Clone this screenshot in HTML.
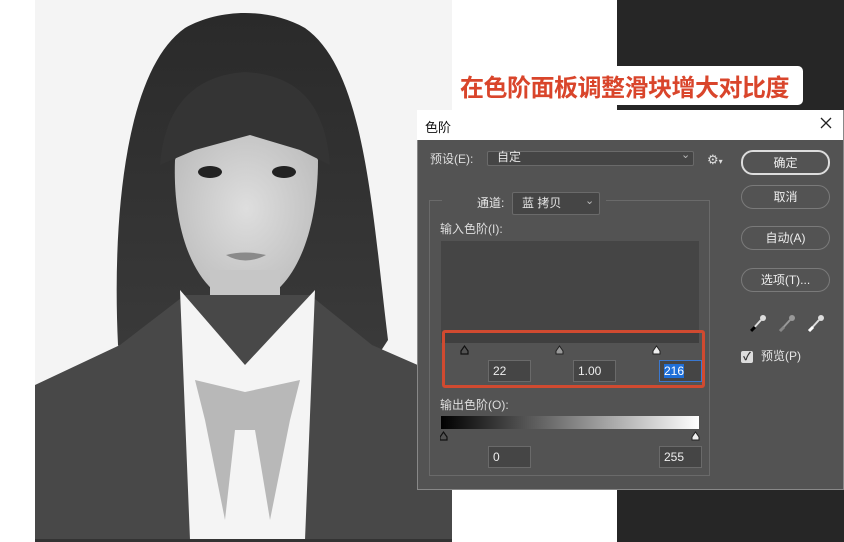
<!DOCTYPE html>
<html><head><meta charset="utf-8"><style>
*{margin:0;padding:0;box-sizing:border-box}
body{width:844px;height:542px;overflow:hidden;background:#fff;position:relative;font-family:"Liberation Sans","Noto Sans CJK SC",sans-serif}
.a{position:absolute}
.t{color:#e6e6e6;font-size:12px;line-height:1}
.btn{position:absolute;left:741px;width:89px;height:24px;border:1px solid #7a7a7a;border-radius:12px;color:#eee;font-size:12px;text-align:center;line-height:22px}
.inp{position:absolute;height:22px;border:1px solid #6a6a6a;background:#454545;color:#eee;font-size:12px;line-height:20px;padding-left:4px}
</style></head><body>
<div class="a" style="left:617px;top:0;width:227px;height:542px;background:#262626"></div>
<svg class="a" style="left:35px;top:0" width="417" height="542" viewBox="35 0 417 542">
<defs>
<radialGradient id="f" cx="0.5" cy="0.45" r="0.6"><stop offset="0" stop-color="#dedede"/><stop offset="1" stop-color="#bcbcbc"/></radialGradient>
<linearGradient id="h" x1="0" y1="0" x2="0" y2="1"><stop offset="0" stop-color="#2a2a2a"/><stop offset="1" stop-color="#3a3a3a"/></linearGradient>
</defs>
<rect x="35" y="0" width="417" height="542" fill="#f4f4f4"/>
<path d="M118 345 C112 220 125 70 185 28 C220 8 270 8 305 28 C365 70 372 210 388 340 L375 360 L125 360Z" fill="url(#h)"/>
<path d="M175 160 C172 240 200 300 245 305 C290 300 318 240 318 160 C300 120 190 120 175 160Z" fill="url(#f)"/>
<path d="M160 165 C165 100 200 75 245 72 C295 75 325 100 330 165 L300 150 L250 135 L195 150Z" fill="#343434"/>
<rect x="210" y="270" width="70" height="70" fill="#c6c6c6"/>
<ellipse cx="210" cy="172" rx="12" ry="6" fill="#222"/><ellipse cx="284" cy="172" rx="12" ry="6" fill="#222"/>
<path d="M226 255 Q245 250 266 255 Q245 266 226 255Z" fill="#8a8a8a"/>
<path d="M35 385 L120 345 L185 295 L310 295 L372 345 L452 380 L452 542 L35 542Z" fill="#484848"/>
<path d="M180 290 L245 365 L315 290 L305 540 L190 540Z" fill="#f4f4f4"/>
<path d="M195 380 L245 392 L300 380 L290 420 L270 520 L255 430 L235 430 L225 520 L205 420Z" fill="#b8b8b8"/>
<rect x="35" y="539" width="417" height="3" fill="#333"/>
</svg>
<div class="a" style="left:455px;top:66px;width:348px;height:39px;background:#fff;border-radius:5px;color:#d9452b;font-size:24px;font-weight:bold;line-height:39px;padding-left:5px;font-family:'Noto Sans CJK SC',sans-serif;letter-spacing:-0.5px;white-space:nowrap">在色阶面板调整滑块增大对比度</div>
<div class="a" style="left:417px;top:110px;width:427px;height:380px;background:#535353;border:1px solid #888"></div>
<div class="a" style="left:417px;top:110px;width:426px;height:30px;background:#fff"></div>
<div class="a" style="left:425px;top:117px;font-size:13px;color:#111">色阶</div>
<svg class="a" style="left:820px;top:117px" width="12" height="12"><path d="M1 1L11 11M11 1L1 11" stroke="#222" stroke-width="1.3"/></svg>
<div class="a t" style="left:430px;top:153px;color:#ddd">预设(E):</div>
<div class="a" style="left:487px;top:151px;width:207px;height:15px;border:1px solid #6a6a6a;background:#454545;border-radius:2px"></div>
<div class="a t" style="left:497px;top:151px">自定</div>
<div class="a t" style="left:681px;top:150px;font-size:11px;color:#bbb">⌄</div>
<div class="a t" style="left:707px;top:153px;font-size:13px;color:#ddd">⚙<span style="font-size:8px">▾</span></div>
<div class="btn" style="top:150px;height:25px;border:2px solid #ddd">确定</div>
<div class="btn" style="top:185px">取消</div>
<div class="btn" style="top:226px">自动(A)</div>
<div class="btn" style="top:268px">选项(T)...</div>
<svg class="a" style="left:748px;top:312px" width="80" height="22">
<g stroke-width="2" fill="none"><path d="M3 19 L13 8" stroke="#ddd"/><path d="M3 19 L7 15" stroke="#000" stroke-width="3"/><circle cx="15" cy="6" r="3" fill="#ddd"/>
<path d="M32 19 L42 8" stroke="#999"/><path d="M32 19 L36 15" stroke="#888" stroke-width="3"/><circle cx="44" cy="6" r="3" fill="#999"/>
<path d="M61 19 L71 8" stroke="#ddd"/><path d="M61 19 L65 15" stroke="#fff" stroke-width="3"/><circle cx="73" cy="6" r="3" fill="#ddd"/></g></svg>
<div class="a" style="left:741px;top:351px;width:12px;height:12px;background:#ddd;border-radius:2px;color:#333;font-size:11px;line-height:12px;text-align:center;font-weight:bold">✓</div>
<div class="a t" style="left:761px;top:350px">预览(P)</div>
<div class="a" style="left:429px;top:200px;width:281px;height:276px;border:1px solid #6a6a6a"></div>
<div class="a" style="left:442px;top:195px;width:164px;height:12px;background:#535353"></div>
<div class="a t" style="left:477px;top:197px">通道:</div>
<div class="a" style="left:512px;top:192px;width:88px;height:23px;border:1px solid #6a6a6a;background:#454545;border-radius:2px"></div>
<div class="a t" style="left:522px;top:197px">蓝 拷贝</div>
<div class="a t" style="left:585px;top:196px;font-size:11px;color:#bbb">⌄</div>
<div class="a t" style="left:440px;top:223px;color:#ddd">输入色阶(I):</div>
<div class="a" style="left:441px;top:241px;width:258px;height:102px;background:#454545"></div>
<div class="a" style="left:445px;top:333px;width:254px;height:10px;background:#3f3f3f"></div>
<div class="a" style="left:442px;top:330px;width:263px;height:58px;border:3px solid #d04a30;border-radius:3px"></div>
<svg class="a" style="left:440px;top:343px" width="270" height="100">
<path d="M21 11 L28 11 L28 8 L24.5 3 L21 8Z" fill="none" stroke="#111" stroke-width="1.2"/>
<path d="M116 11 L123 11 L123 8 L119.5 3 L116 8Z" fill="#999" stroke="#222" stroke-width="1"/>
<path d="M213 11 L220 11 L220 8 L216.5 3 L213 8Z" fill="#eee" stroke="#222" stroke-width="1"/>
<path d="M0 97 L7 97 L7 94 L3.5 89 L0 94Z" fill="none" stroke="#111" stroke-width="1.2"/>
<path d="M252 97 L259 97 L259 94 L255.5 89 L252 94Z" fill="#eee" stroke="#222" stroke-width="1"/>
</svg>
<div class="inp" style="left:488px;top:360px;width:43px">22</div>
<div class="inp" style="left:573px;top:360px;width:43px">1.00</div>
<div class="inp" style="left:659px;top:360px;width:43px;border:1px solid #3a78d0"><span style="background:#1f6fd8;color:#fff">216</span></div>
<div class="a t" style="left:440px;top:399px;color:#ddd">输出色阶(O):</div>
<div class="a" style="left:441px;top:416px;width:258px;height:13px;background:linear-gradient(90deg,#000,#fff)"></div>
<div class="inp" style="left:488px;top:446px;width:43px">0</div>
<div class="inp" style="left:659px;top:446px;width:43px">255</div>
</body></html>
